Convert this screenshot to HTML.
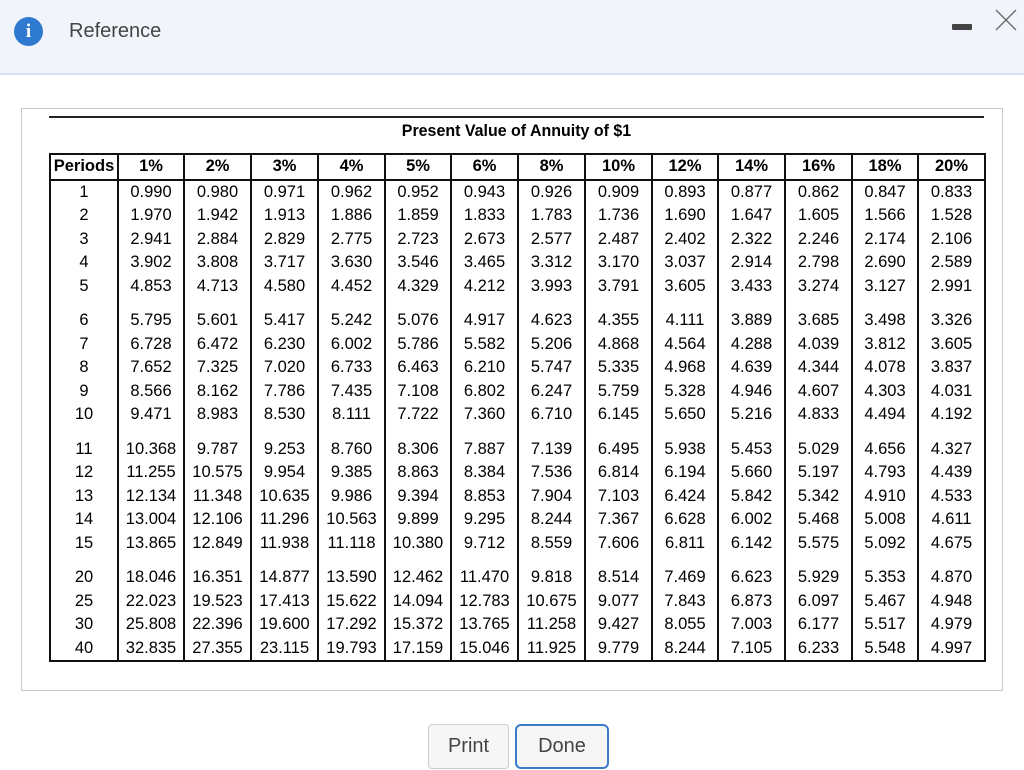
<!DOCTYPE html>
<html><head><meta charset="utf-8"><style>
*{margin:0;padding:0;box-sizing:border-box}
body{width:1024px;height:770px;background:#fff;font-family:"Liberation Sans",Arial,sans-serif;position:relative;overflow:hidden}
.hdr{position:absolute;left:0;top:0;width:1024px;height:75px;background:#f1f4fa;border-bottom:2px solid #d6e4f5}
.icon{position:absolute;left:14px;top:17px;width:29px;height:29px;border-radius:50%;background:#2f7ad1;color:#fff;font:bold 19px "Liberation Serif",serif;text-align:center;line-height:29px}
.title{position:absolute;left:69px;top:20px;font-size:20px;color:#444}
.min{position:absolute;left:952px;top:24px;width:20px;height:6px;background:#444;border-radius:1px}
.box{position:absolute;left:21px;top:108px;width:982px;height:583px;border:1px solid #c8c8c8}
.line{position:absolute;left:49px;top:116px;width:935px;height:2px;background:#222}
.ptitle{position:absolute;left:49px;width:935px;top:121px;text-align:center;font-weight:bold;font-size:17px;transform:scaleX(0.94)}
table{position:absolute;left:49px;top:153px;border-collapse:collapse;font-size:16.5px;table-layout:fixed}
td,th{border-left:2px solid #111;border-right:2px solid #111;text-align:center;height:23.5px;padding:0;line-height:23.5px}
th{height:25px;border-top:2px solid #111;border-bottom:2px solid #111}
tr.sp td{height:11px}
tr.last td{border-bottom:2px solid #111;height:24px}
.btn{position:absolute;top:724px;height:45px;border:1px solid #ccc;border-radius:4px;background:#f6f6f6;font-size:20px;color:#444;text-align:center;line-height:43px}
</style></head><body>
<div class="hdr"><div class="icon">i</div><div class="title">Reference</div><div class="min"></div>
<svg style="position:absolute;left:994px;top:8px" width="24" height="24"><path d="M2 2L22 22M22 2L2 22" stroke="#666" stroke-width="1.3"/></svg></div>
<div class="box"></div>
<div class="line"></div>
<div class="ptitle">Present Value of Annuity of $1</div>
<table>
<colgroup><col style="width:68px"><col style="width:66px"><col style="width:67px"><col style="width:67px"><col style="width:67px"><col style="width:66px"><col style="width:67px"><col style="width:67px"><col style="width:67px"><col style="width:66px"><col style="width:67px"><col style="width:67px"><col style="width:66px"><col style="width:67px"></colgroup>
<tr><th>Periods</th><th>1%</th><th>2%</th><th>3%</th><th>4%</th><th>5%</th><th>6%</th><th>8%</th><th>10%</th><th>12%</th><th>14%</th><th>16%</th><th>18%</th><th>20%</th></tr>
<tr><td>1</td><td>0.990</td><td>0.980</td><td>0.971</td><td>0.962</td><td>0.952</td><td>0.943</td><td>0.926</td><td>0.909</td><td>0.893</td><td>0.877</td><td>0.862</td><td>0.847</td><td>0.833</td></tr>
<tr><td>2</td><td>1.970</td><td>1.942</td><td>1.913</td><td>1.886</td><td>1.859</td><td>1.833</td><td>1.783</td><td>1.736</td><td>1.690</td><td>1.647</td><td>1.605</td><td>1.566</td><td>1.528</td></tr>
<tr><td>3</td><td>2.941</td><td>2.884</td><td>2.829</td><td>2.775</td><td>2.723</td><td>2.673</td><td>2.577</td><td>2.487</td><td>2.402</td><td>2.322</td><td>2.246</td><td>2.174</td><td>2.106</td></tr>
<tr><td>4</td><td>3.902</td><td>3.808</td><td>3.717</td><td>3.630</td><td>3.546</td><td>3.465</td><td>3.312</td><td>3.170</td><td>3.037</td><td>2.914</td><td>2.798</td><td>2.690</td><td>2.589</td></tr>
<tr><td>5</td><td>4.853</td><td>4.713</td><td>4.580</td><td>4.452</td><td>4.329</td><td>4.212</td><td>3.993</td><td>3.791</td><td>3.605</td><td>3.433</td><td>3.274</td><td>3.127</td><td>2.991</td></tr>
<tr class="sp"><td></td><td></td><td></td><td></td><td></td><td></td><td></td><td></td><td></td><td></td><td></td><td></td><td></td><td></td></tr>
<tr><td>6</td><td>5.795</td><td>5.601</td><td>5.417</td><td>5.242</td><td>5.076</td><td>4.917</td><td>4.623</td><td>4.355</td><td>4.111</td><td>3.889</td><td>3.685</td><td>3.498</td><td>3.326</td></tr>
<tr><td>7</td><td>6.728</td><td>6.472</td><td>6.230</td><td>6.002</td><td>5.786</td><td>5.582</td><td>5.206</td><td>4.868</td><td>4.564</td><td>4.288</td><td>4.039</td><td>3.812</td><td>3.605</td></tr>
<tr><td>8</td><td>7.652</td><td>7.325</td><td>7.020</td><td>6.733</td><td>6.463</td><td>6.210</td><td>5.747</td><td>5.335</td><td>4.968</td><td>4.639</td><td>4.344</td><td>4.078</td><td>3.837</td></tr>
<tr><td>9</td><td>8.566</td><td>8.162</td><td>7.786</td><td>7.435</td><td>7.108</td><td>6.802</td><td>6.247</td><td>5.759</td><td>5.328</td><td>4.946</td><td>4.607</td><td>4.303</td><td>4.031</td></tr>
<tr><td>10</td><td>9.471</td><td>8.983</td><td>8.530</td><td>8.111</td><td>7.722</td><td>7.360</td><td>6.710</td><td>6.145</td><td>5.650</td><td>5.216</td><td>4.833</td><td>4.494</td><td>4.192</td></tr>
<tr class="sp"><td></td><td></td><td></td><td></td><td></td><td></td><td></td><td></td><td></td><td></td><td></td><td></td><td></td><td></td></tr>
<tr><td>11</td><td>10.368</td><td>9.787</td><td>9.253</td><td>8.760</td><td>8.306</td><td>7.887</td><td>7.139</td><td>6.495</td><td>5.938</td><td>5.453</td><td>5.029</td><td>4.656</td><td>4.327</td></tr>
<tr><td>12</td><td>11.255</td><td>10.575</td><td>9.954</td><td>9.385</td><td>8.863</td><td>8.384</td><td>7.536</td><td>6.814</td><td>6.194</td><td>5.660</td><td>5.197</td><td>4.793</td><td>4.439</td></tr>
<tr><td>13</td><td>12.134</td><td>11.348</td><td>10.635</td><td>9.986</td><td>9.394</td><td>8.853</td><td>7.904</td><td>7.103</td><td>6.424</td><td>5.842</td><td>5.342</td><td>4.910</td><td>4.533</td></tr>
<tr><td>14</td><td>13.004</td><td>12.106</td><td>11.296</td><td>10.563</td><td>9.899</td><td>9.295</td><td>8.244</td><td>7.367</td><td>6.628</td><td>6.002</td><td>5.468</td><td>5.008</td><td>4.611</td></tr>
<tr><td>15</td><td>13.865</td><td>12.849</td><td>11.938</td><td>11.118</td><td>10.380</td><td>9.712</td><td>8.559</td><td>7.606</td><td>6.811</td><td>6.142</td><td>5.575</td><td>5.092</td><td>4.675</td></tr>
<tr class="sp"><td></td><td></td><td></td><td></td><td></td><td></td><td></td><td></td><td></td><td></td><td></td><td></td><td></td><td></td></tr>
<tr><td>20</td><td>18.046</td><td>16.351</td><td>14.877</td><td>13.590</td><td>12.462</td><td>11.470</td><td>9.818</td><td>8.514</td><td>7.469</td><td>6.623</td><td>5.929</td><td>5.353</td><td>4.870</td></tr>
<tr><td>25</td><td>22.023</td><td>19.523</td><td>17.413</td><td>15.622</td><td>14.094</td><td>12.783</td><td>10.675</td><td>9.077</td><td>7.843</td><td>6.873</td><td>6.097</td><td>5.467</td><td>4.948</td></tr>
<tr><td>30</td><td>25.808</td><td>22.396</td><td>19.600</td><td>17.292</td><td>15.372</td><td>13.765</td><td>11.258</td><td>9.427</td><td>8.055</td><td>7.003</td><td>6.177</td><td>5.517</td><td>4.979</td></tr>
<tr class="last"><td>40</td><td>32.835</td><td>27.355</td><td>23.115</td><td>19.793</td><td>17.159</td><td>15.046</td><td>11.925</td><td>9.779</td><td>8.244</td><td>7.105</td><td>6.233</td><td>5.548</td><td>4.997</td></tr>
</table>
<div class="btn" style="left:428px;width:81px">Print</div>
<div class="btn" style="left:515px;width:94px;border:2px solid #3a7cc9;border-radius:6px;line-height:41px">Done</div>
</body></html>
